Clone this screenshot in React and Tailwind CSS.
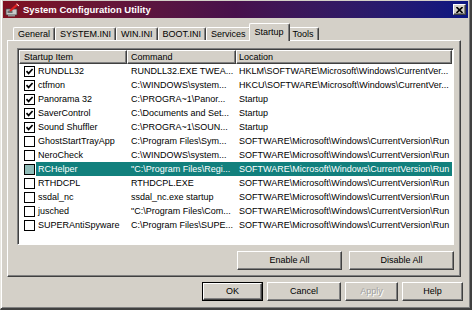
import React from 'react';

const rows = [
  { name: 'RUNDLL32', cmd: 'RUNDLL32.EXE TWEA...', loc: 'HKLM\\SOFTWARE\\Microsoft\\Windows\\CurrentVer...', on: true },
  { name: 'ctfmon', cmd: 'C:\\WINDOWS\\system...', loc: 'HKCU\\SOFTWARE\\Microsoft\\Windows\\CurrentVer...', on: true },
  { name: 'Panorama 32', cmd: 'C:\\PROGRA~1\\Panor...', loc: 'Startup', on: true },
  { name: 'SaverControl', cmd: 'C:\\Documents and Set...', loc: 'Startup', on: true },
  { name: 'Sound Shuffler', cmd: 'C:\\PROGRA~1\\SOUN...', loc: 'Startup', on: true },
  { name: 'GhostStartTrayApp', cmd: 'C:\\Program Files\\Sym...', loc: 'SOFTWARE\\Microsoft\\Windows\\CurrentVersion\\Run' },
  { name: 'NeroCheck', cmd: 'C:\\WINDOWS\\system...', loc: 'SOFTWARE\\Microsoft\\Windows\\CurrentVersion\\Run' },
  { name: 'RCHelper', cmd: '"C:\\Program Files\\Regi...', loc: 'SOFTWARE\\Microsoft\\Windows\\CurrentVersion\\Run', selected: true },
  { name: 'RTHDCPL', cmd: 'RTHDCPL.EXE', loc: 'SOFTWARE\\Microsoft\\Windows\\CurrentVersion\\Run' },
  { name: 'ssdal_nc', cmd: 'ssdal_nc.exe startup', loc: 'SOFTWARE\\Microsoft\\Windows\\CurrentVersion\\Run' },
  { name: 'jusched', cmd: '"C:\\Program Files\\Com...', loc: 'SOFTWARE\\Microsoft\\Windows\\CurrentVersion\\Run' },
  { name: 'SUPERAntiSpyware', cmd: 'C:\\Program Files\\SUPE...', loc: 'SOFTWARE\\Microsoft\\Windows\\CurrentVersion\\Run' },
];

const tabs = ['General', 'SYSTEM.INI', 'WIN.INI', 'BOOT.INI', 'Services', 'Startup', 'Tools'];

const raised = 'border border-t-white border-l-white border-r-[#404040] border-b-[#404040] shadow-[inset_-1px_-1px_0_#808080]';

function Checkbox({ on, selected }) {
  return (
    <div className={`w-[11px] h-[11px] border border-black flex items-center justify-center ${selected ? 'bg-[#8fbcb8]' : 'bg-white'}`}>
      {on && (
        <svg width="9" height="9" viewBox="0 0 9 9">
          <path d="M1.5 4.2 L3.6 6.4 L7.6 2" fill="none" stroke="#000" strokeWidth="1.7" />
        </svg>
      )}
    </div>
  );
}

function Button({ label, w, disabled, isDefault }) {
  return (
    <div className={`h-[19px] ${w} ${isDefault ? 'border border-black' : ''} flex`}>
      <div className={`flex-1 ${raised} flex items-center justify-center ${disabled ? 'text-[#a0a0a0] [text-shadow:1px_1px_0_#fff]' : 'text-black'}`}>
        {label}
      </div>
    </div>
  );
}

export default function App() {
  return (
    <div className="w-[472px] h-[310px] bg-[#d4d0c8] text-[9px] leading-none text-black flex flex-col border-l border-l-[#e8e6e0] border-r-[2px] border-r-[#404040] border-b-[2px] border-b-[#404040] shadow-[inset_1px_0_0_#fff,inset_-1px_-1px_0_#808080]"
      style={{ fontFamily: '"Liberation Sans", Arial, sans-serif' }}>
      {/* title bar */}
      <div className="h-[17px] mx-[2px] mt-[1px] bg-linear-to-r from-[#80101e] via-[#48104c] to-[#0a1682] flex items-center pl-[2px] pr-[2px]">
        <svg width="15" height="14" viewBox="0 0 15 14" className="mr-[3px]">
          <rect x="1" y="6" width="11" height="6" fill="#c8c8c8" stroke="#404040" strokeWidth="0.8" />
          <rect x="2.5" y="7.5" width="5" height="2.5" fill="#6a6a6a" />
          <rect x="3" y="12" width="7" height="1.5" fill="#909090" />
          <path d="M5 8 L13 1" stroke="#e02020" strokeWidth="2.2" />
          <path d="M11.5 1 L14 3" stroke="#ffffff" strokeWidth="1" />
        </svg>
        <span className="text-white font-bold text-[9.5px] flex-1">System Configuration Utility</span>
        <div className={`w-[13px] h-[11px] bg-[#d4d0c8] ${raised} flex items-center justify-center`}>
          <svg width="7" height="6" viewBox="0 0 7 6">
            <path d="M0.5 0 L6.5 6 M6.5 0 L0.5 6" stroke="#000" strokeWidth="1.6" />
          </svg>
        </div>
      </div>

      {/* tabs */}
      <div className="flex items-end h-[17px] mt-[5px] ml-[10px] relative z-10">
        {tabs.map((t) => {
          const sel = t === 'Startup';
          return (
            <div key={t}
              className={`flex items-center border-t border-l border-t-white border-l-white border-r border-r-[#404040] shadow-[inset_-1px_0_0_#808080] rounded-t-[2px] ${sel ? 'h-[18px] -mb-[1px] px-[5px] -mx-[2px] bg-[#d4d0c8] z-10' : 'h-[13px] px-[4px]'} ${t === 'General' ? 'ml-[2px]' : ''}`}>
              {t}
            </div>
          );
        })}
      </div>

      {/* panel */}
      <div className="ml-[6px] w-[454px] h-[237px] border border-t-white border-l-white border-r-[#404040] border-b-[#404040] shadow-[inset_-1px_-1px_0_#808080] pt-[7px] pl-[9px] flex flex-col">
        <div className="w-[437px] h-[197px] bg-white border border-t-[#808080] border-l-[#808080] border-b-white border-r-white shadow-[inset_1px_1px_0_#404040] pt-[1px] pl-[1px] flex flex-col">
          {/* header */}
          <div className="flex h-[14px] bg-[#d4d0c8] mr-[1px]">
            <div className={`w-[108px] ${raised} flex items-center pl-[4px]`}>Startup Item</div>
            <div className={`w-[109px] ${raised} flex items-center pl-[3px]`}>Command</div>
            <div className={`flex-1 ${raised} flex items-center pl-[2px]`}>Location</div>
          </div>
          {rows.map((r) => (
            <div key={r.name} className="flex h-[14px] items-center mr-[1px]">
              <div className="w-[17px] pl-[5px] flex items-center">
                <Checkbox on={r.on} selected={r.selected} />
              </div>
              <div className={`flex-1 h-full flex items-center whitespace-nowrap ${r.selected ? 'bg-[#12807d] text-white' : ''}`}>
                <div className="w-[91px] pl-[2px]">{r.name}</div>
                <div className="w-[109px] pl-[4px]">{r.cmd}</div>
                <div className="flex-1 pl-[3px] overflow-hidden">{r.loc}</div>
              </div>
            </div>
          ))}
        </div>
        <div className="flex justify-end gap-[7px] mt-[6px] w-[437px]">
          <Button label="Enable All" w="w-[105px]" />
          <Button label="Disable All" w="w-[105px]" />
        </div>
      </div>

      {/* bottom buttons */}
      <div className="flex mt-[5px] pl-[201px] gap-[4px]">
        <Button label="OK" w="w-[61px]" isDefault />
        <Button label="Cancel" w="w-[74px]" />
        <Button label="Apply" w="w-[53px]" disabled />
        <Button label="Help" w="w-[61px]" />
      </div>
    </div>
  );
}
